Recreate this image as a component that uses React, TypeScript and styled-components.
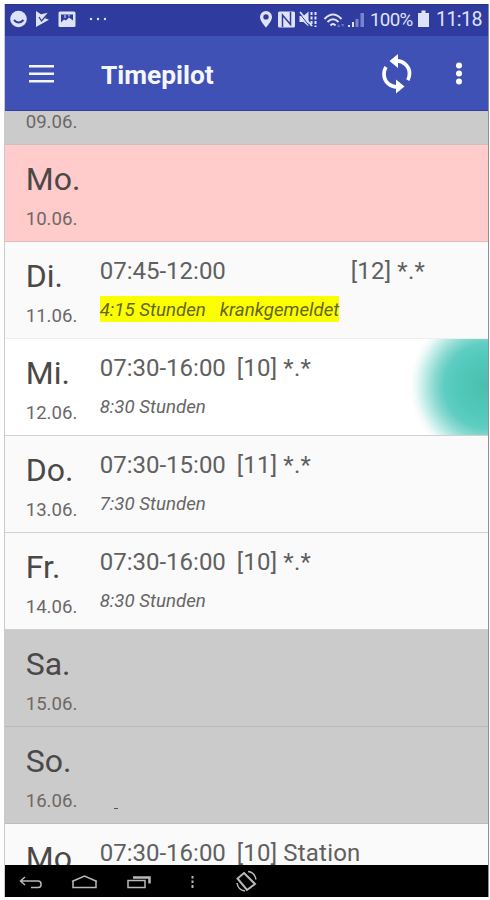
import React from 'react';
import styled, { createGlobalStyle } from 'styled-components';

const GlobalStyle = createGlobalStyle`
  * { box-sizing: border-box; }
  body { margin: 0; background: #fff; font-family: Roboto, "Liberation Sans", sans-serif; }
  svg { display: block; flex: none; }
`;

const Page = styled.main`
  width: 490px;
  height: 900px;
  padding: 4px 1px 3px 4px;
  overflow: hidden;
  background: #fff;
`;

const Phone = styled.div`
  display: flex;
  flex-direction: column;
  width: 485px;
  height: 893px;
  border-right: 1px solid #8d8d98;
  border-left: 1px solid #c9c9cf;
  overflow: hidden;
`;

const StatusBar = styled.header`
  display: flex;
  flex: 0 0 32px;
  justify-content: space-between;
  margin: 0 -1px;
  padding: 0 7px 0 0;
  background: #303b9f;
  color: #dfe3fa;
  border-top: 1px solid #29338a;
`;

const AppBar = styled.nav`
  display: flex;
  flex: 0 0 75px;
  align-items: center;
  margin: 0 -1px;
  padding: 1px 21px 0 22px;
  background: #3f51b5;
  border-bottom: 1px solid #34409f;
  color: #fff;
`;

const Title = styled.h1`
  flex: 1;
  margin: 3px 0 0 45px;
  font-size: 26.3px;
  line-height: 30px;
  font-weight: 700;
  color: #f5f6ff;
`;

const IconButton = styled.button`
  display: flex;
  padding: 0;
  border: 0;
  background: none;
  color: inherit;
`;

const Schedule = styled.section`
  display: flex;
  flex: 1;
  flex-direction: column;
  min-height: 0;
  overflow: hidden;
`;

type Tone = 'plain' | 'active' | 'holiday' | 'weekend';
const tones: Record<Tone, string> = {
  plain: '#fafafa',
  active: '#fff',
  holiday: '#ffcbcb',
  weekend: '#cbcbcb',
};

const Row = styled.article<{ $tone: Tone; $scrolled?: boolean; $line: string }>`
  display: grid;
  grid-template-columns: 94px 1fr;
  flex: 0 0 97px;
  margin-top: ${p => (p.$scrolled ? '-63px' : '0')};
  padding-left: 0.7px;
  border-bottom: 1px solid ${p => p.$line};
  background: ${p => tones[p.$tone]};
  ${p => p.$tone === 'active' && `background-image: radial-gradient(circle at 481px 47px,
    #4bbfae 0, #52c9bc 30px, #5fcdc2 42px, #8bdad1 52px, #c0ece7 62px, #ecf9f8 70px, #fff 76px);`}
`;

const DayCell = styled.div`
  padding: 15px 0 0 20px;
`;

const Day = styled.div`
  height: 41px;
  font-size: 32px;
  line-height: 38px;
  color: #4b4848;
`;

const DateText = styled.div`
  margin-top: 7px;
  font-size: 18.6px;
  line-height: 22px;
  color: #6c6868;
`;

const Entry = styled.div`
  padding-top: 15px;
`;

const Shift = styled.div`
  display: flex;
  font-size: 24px;
  line-height: 28px;
  white-space: pre;
  color: #606060;
`;

const Time = styled.span<{ $wide?: boolean }>`
  width: ${p => (p.$wide ? '251px' : '137px')};
`;

const Place = styled.span`
  letter-spacing: 0.2px;
`;

const Duration = styled.div<{ $marked?: boolean }>`
  width: fit-content;
  height: 26px;
  margin-top: 11px;
  font-size: 18.7px;
  line-height: 29px;
  font-style: italic;
  white-space: pre;
  color: ${p => (p.$marked ? '#65651b' : '#666')};
  background: ${p => (p.$marked ? '#fbff00' : 'transparent')};
`;

const Remark = styled.span`
  margin-left: 14px;
`;

const Dash = styled.div`
  width: 4px;
  height: 1px;
  margin: 66px 0 0 14px;
  background: #555;
`;

const SystemBar = styled.footer`
  flex: 0 0 32px;
  margin: 0 -1px;
  background: #000;
`;

function StatusLeft() {
  return (
    <svg width="105" height="31" viewBox="4 5 105 31" fill="currentColor">
      <circle cx="18.5" cy="19" r="8.3" />
      <path d="M14 20q4.500 5 9.500 0" fill="none" stroke="#303b9f" strokeWidth="2" />
      <path d="M36 11l5 3.200 7-1.500-3 5.500 4 1.500L36 27z" />
      <path d="m39 17 2.500 4 7-8" fill="none" stroke="#303b9f" strokeWidth="1.300" />
      <rect x="58.500" y="11.500" width="17" height="15.500" rx="1.500" />
      <path d="M61 14.500h12v6l-4-3-3 3-2-1-3 3z" fill="#303b9f" />
      <path d="M65 15v3M69 14.500v2" stroke="#dfe3fa" />
      <circle cx="91" cy="19" r="1.200" /><circle cx="98" cy="19" r="1.200" /><circle cx="105" cy="19" r="1.200" />
    </svg>
  );
}

const StatusInfo = styled.div`
  display: flex;
  font-size: 18.8px;
  line-height: 30px;
`;
const Charge = styled.span`
  width: 46px;
  letter-spacing: -0.7px;
`;
const Clock = styled.time`
  width: 46px;
  margin-left: 6px;
  font-size: 19.6px;
  white-space: nowrap;
  letter-spacing: -0.6px;
`;

function StatusIcons() {
  return (
    <svg width="112" height="31" viewBox="258 5 112 31" fill="currentColor">
      <path fillRule="evenodd" d="M266 11a6 6 0 0 0-6 6c0 4.200 6 10.500 6 10.500s6-6.300 6-10.500a6 6 0 0 0-6-6zm0 3.200a2.700 2.700 0 1 1 0 5.400 2.700 2.700 0 0 1 0-5.400z" />
      <rect x="278" y="11.500" width="17" height="16" rx="1.500" />
      <path d="M282.500 27V15l8 9.500V12" fill="none" stroke="#303b9f" strokeWidth="1.500" />
      <path d="M299.500 16h4l5-4.500v15l-5-4.500h-4z" />
      <path d="m300 14 11 14" stroke="#303b9f" strokeWidth="1" />
      <path d="m300 12 12 14" stroke="currentColor" strokeWidth="1.700" />
      <path d="M311.500 12v14M315.500 12v15" stroke="currentColor" strokeWidth="2" strokeDasharray="3 1.500" />
      <g fill="none" stroke="currentColor" strokeWidth="2">
        <path d="M324.500 19q8.500-9 17 0M327.500 22q5.500-5.500 11 0M330.500 25.500q2.500-3 5 0" />
      </g>
      <path d="m337 27 1.700-3 1.700 3M341 24l1.700 3 1.700-3" fill="#6876c8" />
      <path d="M348 25h2v2h-2zM352 22h2v5h-2z" />
      <path d="M355.500 19h3v8h-3zM360.500 13h3.500v14h-3.500z" fill="#7884ce" />
    </svg>
  );
}

function BatteryIcon() {
  return <svg width="14" height="31" viewBox="0 0 14 31" fill="currentColor"><path d="M5.500 5.500h4V8H13v14H2V8h3.500z" /></svg>;
}

function MenuIcon() {
  return <svg width="30" height="30" viewBox="26 58 30 30"><path d="M29 65.300h25M29 72.800h25M29 80.300h25" stroke="#f5f6ff" strokeWidth="2.600" /></svg>;
}

function SyncIcon() {
  return (
    <svg width="40" height="44" viewBox="377 52 40 44" fill="none" stroke="#fff" strokeWidth="3.700">
      <path d="M396 61a12.500 12.500 0 0 1 13.500 12.500c0 2.500-.5 4.500-1.700 6.700M399 86.500A12.500 12.500 0 0 1 384 74c0-2.800.7-5 2-7" />
      <path d="m398 54-8.500 7 8.500 7zM396 79.500l8.500 7-8.500 7z" fill="#fff" stroke="none" />
    </svg>
  );
}

const OverflowButton = styled(IconButton)`
  margin-left: 33px;
`;

function OverflowIcon() {
  return <svg width="18" height="34" viewBox="450 57 18 34" fill="#fff"><circle cx="459" cy="65.500" r="3" /><circle cx="459" cy="73.500" r="3" /><circle cx="459" cy="81.500" r="3" /></svg>;
}

function NavigationIcons() {
  return (
    <svg width="270" height="32" viewBox="4 865 270 32" fill="none" stroke="#b9b9b9" strokeWidth="1.500">
      <path d="m25 877-4.500 4 4.500 4M21 881h17q3 0 3 3v1q0 2.500-3 2.500h-7" />
      <path d="M72 881.500 84.500 876 97 881.500M73 881v6.500h23V881" />
      <path d="M128 880.500h17v7h-17z" />
      <path d="M133 877.500h16.500v6" strokeWidth="2.500" />
      <path d="M192.500 876v2.500M192.500 880.500v2.500M192.500 885v3" strokeWidth="2" />
      <path d="m244 873 11 11-8 6-9.500-11.500z" strokeWidth="2" />
      <path d="M248 871.500q6.500.5 8 8M237 883q1 7 8 8" />
    </svg>
  );
}

interface DayData {
  day: string;
  date: string;
  tone?: Tone;
  time?: string;
  place?: string;
  duration?: string;
  remark?: string;
  line?: string;
  dash?: boolean;
}

const days: DayData[] = [
  { day: 'So.', date: '09.06.', tone: 'weekend', line: '#c6c3c3' },
  { day: 'Mo.', date: '10.06.', tone: 'holiday', line: '#e2bcbc' },
  { day: 'Di.', date: '11.06.', time: '07:45-12:00', place: '[12] *.*', duration: '4:15 Stunden', remark: 'krankgemeldet', line: '#eeeeee' },
  { day: 'Mi.', date: '12.06.', tone: 'active', time: '07:30-16:00', place: '[10] *.*', duration: '8:30 Stunden' },
  { day: 'Do.', date: '13.06.', time: '07:30-15:00', place: '[11] *.*', duration: '7:30 Stunden' },
  { day: 'Fr.', date: '14.06.', time: '07:30-16:00', place: '[10] *.*', duration: '8:30 Stunden' },
  { day: 'Sa.', date: '15.06.', tone: 'weekend', line: '#b9b9b9' },
  { day: 'So.', date: '16.06.', tone: 'weekend', line: '#bebebe', dash: true },
  { day: 'Mo', date: '17.06.', time: '07:30-16:00', place: '[10] Station' },
];

export default function App() {
  return (
    <Page>
      <GlobalStyle />
      <Phone>
        <StatusBar>
          <StatusLeft />
          <StatusInfo><StatusIcons /><Charge>100%</Charge><BatteryIcon /><Clock>11:18</Clock></StatusInfo>
        </StatusBar>
        <AppBar>
          <IconButton aria-label="Menü"><MenuIcon /></IconButton>
          <Title>Timepilot</Title>
          <IconButton aria-label="Aktualisieren"><SyncIcon /></IconButton>
          <OverflowButton aria-label="Mehr"><OverflowIcon /></OverflowButton>
        </AppBar>
        <Schedule>
          {days.map((d, index) => (
            <Row key={d.date} $tone={d.tone ?? 'plain'} $scrolled={index === 0} $line={d.line ?? '#d0d0d0'}>
              <DayCell><Day>{d.day}</Day><DateText>{d.date}</DateText></DayCell>
              {d.time && (
                <Entry>
                  <Shift><Time $wide={!!d.remark}>{d.time}</Time><Place>{d.place}</Place></Shift>
                  <Duration $marked={!!d.remark}>{d.duration}{d.remark && <Remark>{d.remark}</Remark>}</Duration>
                </Entry>
              )}
              {d.dash && <Entry><Dash /></Entry>}
            </Row>
          ))}
        </Schedule>
        <SystemBar><NavigationIcons /></SystemBar>
      </Phone>
    </Page>
  );
}
